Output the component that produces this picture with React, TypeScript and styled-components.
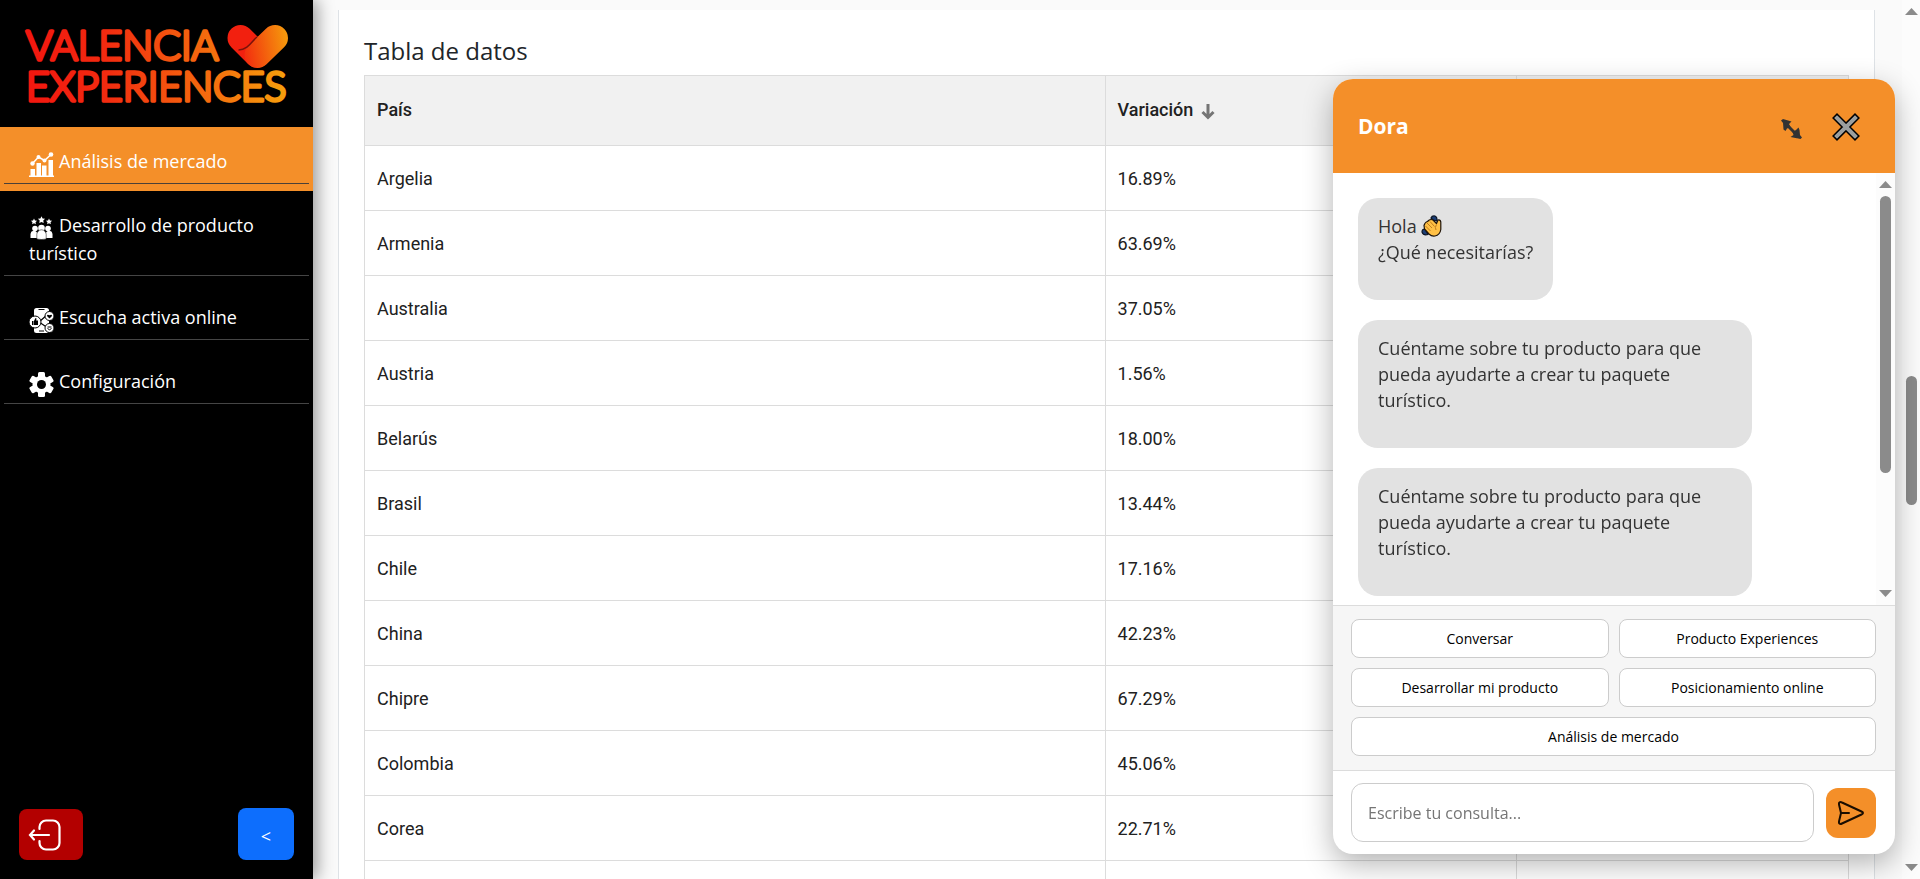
import React from "react";
import styled, { createGlobalStyle, css } from "styled-components";

const SANS = `"Open Sans", "Noto Sans", sans-serif`;
const ORANGE = "#f48f29";

const GlobalStyle = createGlobalStyle`
  *, *::before, *::after { box-sizing: border-box; }
  html, body, #root { height: 100%; }
  body { margin: 0; background: #fafafa; color: #212529; font-family: ${SANS}; font-size: 17px; overflow: hidden; }
  button, input { font-family: inherit; }
`;

const Shell = styled.div`
  display: flex;
  height: 100vh;
  overflow: hidden;
`;

/* ---------- sidebar ---------- */

const Sidebar = styled.aside`
  flex: 0 0 313px;
  display: flex;
  flex-direction: column;
  background: #000;
  box-shadow: 4px 0 16px rgba(0, 0, 0, 0.4);
`;

const LogoLink = styled.a`
  display: block;
  height: 127px;
  padding: 10px 20px;
  svg { display: block; }
`;

const Nav = styled.nav`
  flex: 1;
`;

const NavItem = styled.div<{ $active?: boolean }>`
  padding: 0 4px 7px;
  background: ${(p) => (p.$active ? ORANGE : "transparent")};
`;

const NavLink = styled.a<{ $active?: boolean }>`
  display: block;
  padding: 20px 24px 8px 25px;
  border-bottom: 1px solid ${(p) => (p.$active ? "#4a4038" : "#454545")};
  color: #fff;
  font-size: 18px;
  line-height: 28px;
  text-decoration: none;
  svg { width: 25px; height: 25px; margin: -4px 5px -4px 0; vertical-align: -5px; }
`;

const SidebarFooter = styled.div`
  display: flex;
  justify-content: space-between;
  align-items: flex-end;
  padding: 0 19px 19px;
`;

const FooterButton = styled.button<{ $tone: "danger" | "primary" }>`
  display: flex;
  align-items: center;
  border: 0;
  border-radius: 8px;
  color: #fff;
  font-size: 18px;
  cursor: pointer;
  ${(p) =>
    p.$tone === "danger"
      ? css`width: 64px; height: 51px; padding: 0 8px; background: #b30000;`
      : css`width: 56px; height: 52px; padding: 4px 0 0; justify-content: center; background: #0d6efd;`}
`;

/* ---------- main content ---------- */

const Main = styled.main`
  flex: 1;
  min-width: 0;
  padding: 10px 27px 0 25px;
  overflow: hidden;
`;

const Card = styled.section`
  padding: 26px 25px;
  background: #fff;
  border: solid #dee2e6;
  border-width: 0 1px;
`;

const CardTitle = styled.h2`
  margin: 0 0 9px;
  font-size: 24px;
  font-weight: 500;
  line-height: 30px;
`;

const DataTable = styled.table`
  width: 100%;
  table-layout: fixed;
  border-collapse: collapse;
  font-family: Roboto, sans-serif;
  font-size: 18px;
  color: #212121;
`;

const Col = styled.col<{ $share: number }>`
  width: ${(p) => p.$share}%;
`;

const HeadCell = styled.th`
  height: 70px;
  padding: 0 12px 3px;
  border: 1px solid #dcdcdc;
  background: #f1f1f1;
  font-weight: 500;
  text-align: left;
  svg { margin-left: 8px; vertical-align: -4px; }
`;

const Cell = styled.td`
  height: 65px;
  padding: 0 12px;
  border: 1px solid #dcdcdc;
`;

/* ---------- scroll bars ---------- */

const ScrollTrack = styled.div<{ $width: number; $before: number; $thumb: number }>`
  flex: 0 0 ${(p) => p.$width}px;
  display: grid;
  grid-template-rows: 7px ${(p) => p.$before}fr ${(p) => p.$thumb}fr ${(p) => 1000 - p.$before - p.$thumb}fr 7px;
  justify-items: center;
  padding: 8px 0;
  background: #fcfcfc;
  svg { display: block; }
`;

const ScrollThumb = styled.div`
  grid-row: 3;
  width: 11px;
  border-radius: 6px;
  background: #8b8b8b;
`;

const DownArrow = styled.svg`
  grid-row: 5;
`;

/* ---------- chat ---------- */

const ChatPanel = styled.section`
  position: fixed;
  top: 79px;
  right: 25px;
  bottom: 25px;
  width: 562px;
  display: flex;
  flex-direction: column;
  border-radius: 20px;
  overflow: hidden;
  background: #fff;
  box-shadow: 0 10px 30px rgba(0, 0, 0, 0.3);
`;

const ChatHeader = styled.header`
  flex: 0 0 94px;
  display: flex;
  align-items: center;
  padding: 0 35px 0 25px;
  background: ${ORANGE};
`;

const ChatTitle = styled.h3`
  flex: 1;
  margin: 0;
  color: #fff;
  font-size: 21px;
  font-weight: 700;
  line-height: 28px;
`;

const IconButton = styled.button`
  display: flex;
  margin-left: 30px;
  padding: 2px 0 0;
  border: 0;
  background: none;
  cursor: pointer;
`;

const ChatBody = styled.div`
  flex: 1;
  min-height: 0;
  display: flex;
`;

const Messages = styled.div`
  flex: 1;
  display: flex;
  flex-direction: column;
  align-items: flex-start;
  gap: 20px;
  padding: 25px 25px 0;
  overflow: hidden;
`;

const Bubble = styled.div`
  flex: none;
  max-width: 394px;
  padding: 15px 20px;
  border-radius: 20px;
  background: #e2e2e2;
  color: #333;
  font-size: 18px;
  line-height: 26px;
  p { margin: 0 0 20px; }
  svg { vertical-align: -4px; }
`;

const Suggestions = styled.div`
  display: grid;
  grid-template-columns: 1fr 1fr;
  gap: 10px;
  padding: 13px 19px 14px 18px;
  border: solid #dcdcdc;
  border-width: 1px 0;
  background: #f6f6f6;
`;

const Suggestion = styled.button<{ $wide?: boolean }>`
  height: 39px;
  grid-column: ${(p) => (p.$wide ? "1 / -1" : "auto")};
  border: 1px solid #ccc;
  border-radius: 8px;
  background: #fff;
  color: #000;
  font-size: 14px;
  line-height: 20px;
  cursor: pointer;
`;

const Composer = styled.form`
  display: flex;
  align-items: center;
  gap: 12px;
  padding: 12px 19px 12px 18px;
`;

const QueryInput = styled.input`
  flex: 1;
  min-width: 0;
  height: 59px;
  padding: 0 16px;
  border: 1px solid #ccc;
  border-radius: 12px;
  background: #fff;
  font-size: 16px;
  &::placeholder { color: #757575; opacity: 1; }
`;

const SendButton = styled.button`
  width: 50px;
  height: 50px;
  display: flex;
  align-items: center;
  justify-content: center;
  padding: 0;
  border: 0;
  border-radius: 12px;
  background: ${ORANGE};
  cursor: pointer;
`;

/* ---------- drawings ---------- */

const Logo = () => (
  <svg width="272" height="107" viewBox="20 10 272 107" role="img" aria-label="Valencia Experiences">
    <defs>
      <linearGradient id="brand" gradientUnits="userSpaceOnUse" x1="26" y1="0" x2="288" y2="0">
        <stop offset="0" stopColor="#f2160f" />
        <stop offset="0.3" stopColor="#f22a10" />
        <stop offset="0.65" stopColor="#f4640e" />
        <stop offset="1" stopColor="#f6a00c" />
      </linearGradient>
      <linearGradient id="heart" gradientUnits="userSpaceOnUse" x1="238" y1="50" x2="286" y2="42">
        <stop offset="0" stopColor="#f2200f" />
        <stop offset="1" stopColor="#f5950c" />
      </linearGradient>
    </defs>
    <g fontFamily="Lato, sans-serif" fontWeight="300" fill="url(#brand)" stroke="url(#brand)" strokeWidth="3.500" strokeLinejoin="round">
      <text x="26" y="60" fontSize="41">VALENCIA</text>
      <text x="26" y="101" fontSize="41">EXPERIENCES</text>
    </g>
    <g strokeWidth="26" strokeLinecap="round">
      <path d="M240.500 38 L257 54.500" stroke="#f2200f" />
      <path d="M275 38 L257.500 55" stroke="url(#heart)" />
    </g>
    <path d="M257 37 C252 41 248 50 238.500 50" stroke="#7a120a" strokeWidth="1.500" fill="none" />
  </svg>
);

const ChartIcon = () => (
  <svg viewBox="0 0 25 25" fill="#fff">
    <path d="M0 23.500h25V25H0zM1.500 17h4.500v6.500H1.500zM7.500 11H12v12.500H7.500zM13 13.500h4.500v10H13zM19.500 8H24v15.500h-4.500z" />
    <path d="M3.500 11.500 9.500 5l6 3.500 6.500-6" fill="none" stroke="#fff" strokeWidth="1.500" />
    <circle cx="3.500" cy="11.500" r="2.200" /><circle cx="9.500" cy="5" r="2" />
    <circle cx="15.500" cy="8.500" r="2" /><circle cx="22" cy="2.500" r="2.300" />
  </svg>
);

const STAR = "M0-3.600 1.100-1.300 3.600-1 1.800.800 2.200 3.300 0 2.100-2.200 3.300-1.800.800-3.600-1-1.100-1.300Z";

const GroupIcon = () => (
  <svg viewBox="0 0 25 25" fill="#fff">
    <path d={STAR} transform="translate(12.500 3.800)" />
    <path d={STAR} transform="translate(5 5.500) scale(.85)" />
    <path d={STAR} transform="translate(20 5.500) scale(.85)" />
    <circle cx="6" cy="12.500" r="2.800" /><circle cx="19" cy="12.500" r="2.800" />
    <path d="M1.500 21.500V18a3.500 3.500 0 0 1 6.500-1.500V22H1.500ZM23.500 21.500V18a3.500 3.500 0 0 0-6.500-1.500V22h6.500Z" />
    <circle cx="12.500" cy="12" r="3.300" />
    <path d="M7.800 23v-4.500a4.700 4.700 0 0 1 9.400 0V23q-4.700 1-9.400 0Z" stroke="#000" strokeWidth=".5" />
  </svg>
);

const SocialIcon = () => (
  <svg viewBox="0 0 25 25">
    <rect x="5" y="0" width="15" height="25" rx="2.500" fill="#fff" />
    <path d="M9.500 1.500h6M10 23h5" stroke="#000" strokeWidth="1.200" />
    <path d="M10 14 18 7M10 14l9 6" stroke="#000" strokeWidth="1.200" />
    <g fill="#fff" stroke="#000" strokeWidth="1">
      <circle cx="6" cy="14" r="6" /><circle cx="20.500" cy="8" r="4.500" /><circle cx="20.500" cy="20" r="4.500" />
    </g>
    <path d="M3 13h1.500v4H3zM5 17v-4l1.500-3 1 .5-.3 2H9v4.500z" fill="#000" />
    <path d="M20.500 10.500 18 8q0-2 2.500-.7Q23 6 23 8z" fill="#000" />
    <path d="M18.500 19h4M18.500 20.500q2 2.500 4 0" fill="none" stroke="#000" />
  </svg>
);

const GearIcon = () => (
  <svg viewBox="0 0 25 25">
    <g fill="#fff">
      {[0, 60, 120].map((a) => (
        <rect key={a} x="9" y="0" width="7" height="25" rx="1.500" transform={`rotate(${a} 12.500 12.500)`} />
      ))}
      <circle cx="12.500" cy="12.500" r="9" />
    </g>
    <circle cx="12.500" cy="12.500" r="4.500" fill="#000" />
  </svg>
);

const LogoutIcon = () => (
  <svg width="34" height="34" viewBox="0 0 34 34" fill="none" stroke="#fff" strokeWidth="2.200" strokeLinecap="round">
    <path d="M12.500 11V9a6.500 6.500 0 0 1 6.500-6.500h7A6.500 6.500 0 0 1 32.500 9v16a6.500 6.500 0 0 1-6.500 6.500h-7a6.500 6.500 0 0 1-6.500-6.500v-2" />
    <path d="M22 17H4M7 12.500 3 17l4 4.500" />
  </svg>
);

const SortArrow = () => (
  <svg width="14" height="16" viewBox="0 0 14 16" fill="none" stroke="#757575" strokeWidth="3">
    <path d="M7 0v13M1.500 8 7 13.500 12.500 8" />
  </svg>
);

const ResizeIcon = () => (
  <svg width="21" height="26" viewBox="0 -5 21 26" fill="#333">
    <path d="M0 1.500 2 0 10.500 2.500 8 5 9.500 8 6 9.500 4.500 12 2.500 10.500 2 4ZM21 18.500 19.500 20 9.500 18 12.500 16 11.500 13 15 11 17.500 8.500 18.500 11 19 16Z" />
    <path d="M4 4l13 13" stroke="#333" strokeWidth="3" />
  </svg>
);

const CloseIcon = () => (
  <svg width="28" height="28" viewBox="0 0 28 28" strokeLinecap="square" strokeLinejoin="round">
    <path d="M5 5l18 18M23 5 5 23" stroke="#000" strokeWidth="7" />
    <path d="M5 5l18 18M23 5 5 23" stroke="#9b9f9f" strokeWidth="4" />
  </svg>
);

const WaveIcon = () => (
  <svg width="21" height="22" viewBox="0 0 21 22">
    <g fill="#1d3f77" stroke="#0b1526" strokeWidth="1.200">
      <path d="M10 3Q11 .5 14 1q2.500 1 2 5l-4-1Z" />
      <path d="M4 14Q1 14 1 17q1.500 4 6 2.500Z" />
    </g>
    <path d="M3 10.500Q4 7 6.500 6.500 9 3.500 12 5l3.500 3.500L17 5q3-.5 2.800 3v6.500Q19 20 14 21q-3.500.5-6-2l-4.500-5Z" fill="#ffc045" stroke="#20150a" strokeWidth="1.200" strokeLinejoin="round" />
    <path d="M6 8l5 5M9 6.500l4.500 5M4.500 11l5 5M15.500 9.500q-2 3-.5 5.500" stroke="#b8741a" strokeWidth=".9" fill="none" />
  </svg>
);

const SendIcon = () => (
  <svg width="28" height="26" viewBox="0 0 28 26" fill="none" stroke="#1a0d00" strokeWidth="2" strokeLinejoin="round" strokeLinecap="round">
    <path d="M2 4.500C1.500 2.500 3 1.500 5 2.500L24.500 11.500c2 1 2 2 0 3L5 23.500c-2 1-3.500 0-3-2L4 13ZM4 13h8" />
  </svg>
);

const Arrow = () => (
  <svg width="13" height="7" viewBox="0 0 13 7" fill="#8b8b8b"><path d="M6.500 0 13 7H0Z" /></svg>
);

/* ---------- data ---------- */

const navigation = [
  { label: "Análisis de mercado", icon: <ChartIcon />, active: true },
  { label: "Desarrollo de producto turístico", icon: <GroupIcon /> },
  { label: "Escucha activa online", icon: <SocialIcon /> },
  { label: "Configuración", icon: <GearIcon /> },
];

const countries: [string, string][] = [
  ["Argelia", "16.89%"],
  ["Armenia", "63.69%"],
  ["Australia", "37.05%"],
  ["Austria", "1.56%"],
  ["Belarús", "18.00%"],
  ["Brasil", "13.44%"],
  ["Chile", "17.16%"],
  ["China", "42.23%"],
  ["Chipre", "67.29%"],
  ["Colombia", "45.06%"],
  ["Corea", "22.71%"],
  ["", ""],
];

const PROMPT = "Cuéntame sobre tu producto para que pueda ayudarte a crear tu paquete turístico.";

const suggestions = [
  "Conversar",
  "Producto Experiences",
  "Desarrollar mi producto",
  "Posicionamiento online",
  "Análisis de mercado",
];

const Scroll = (p: { width: number; before: number; thumb: number }) => (
  <ScrollTrack $width={p.width} $before={p.before} $thumb={p.thumb} aria-hidden="true">
    <Arrow />
    <ScrollThumb />
    <DownArrow width="13" height="7" viewBox="0 0 13 7" fill="#8b8b8b">
      <path d="M0 0h13L6.500 7Z" />
    </DownArrow>
  </ScrollTrack>
);

export default function App() {
  return (
    <>
      <GlobalStyle />
      <Shell>
        <Sidebar>
          <LogoLink href="#"><Logo /></LogoLink>
          <Nav>
            {navigation.map((n) => (
              <NavItem key={n.label} $active={n.active}>
                <NavLink href="#" $active={n.active}>{n.icon}{n.label}</NavLink>
              </NavItem>
            ))}
          </Nav>
          <SidebarFooter>
            <FooterButton $tone="danger" aria-label="Cerrar sesión"><LogoutIcon /></FooterButton>
            <FooterButton $tone="primary">&lt;</FooterButton>
          </SidebarFooter>
        </Sidebar>

        <Main>
          <Card>
            <CardTitle>Tabla de datos</CardTitle>
            <DataTable>
              <colgroup>
                <Col $share={49.9} />
                <Col $share={27.7} />
                <Col $share={22.4} />
              </colgroup>
              <thead>
                <tr>
                  <HeadCell>País</HeadCell>
                  <HeadCell>Variación<SortArrow /></HeadCell>
                  <HeadCell />
                </tr>
              </thead>
              <tbody>
                {countries.map(([name, change]) => (
                  <tr key={name}>
                    <Cell>{name}</Cell>
                    <Cell>{change}</Cell>
                    <Cell />
                  </tr>
                ))}
              </tbody>
            </DataTable>
          </Card>
        </Main>
        <Scroll width={18} before={425} thumb={152} />
      </Shell>

      <ChatPanel aria-label="Dora">
        <ChatHeader>
          <ChatTitle>Dora</ChatTitle>
          <IconButton aria-label="Ampliar"><ResizeIcon /></IconButton>
          <IconButton aria-label="Cerrar"><CloseIcon /></IconButton>
        </ChatHeader>
        <ChatBody>
          <Messages>
            <Bubble><p>Hola <WaveIcon /><br />¿Qué necesitarías?</p></Bubble>
            <Bubble><p>{PROMPT}</p></Bubble>
            <Bubble><p>{PROMPT}</p></Bubble>
          </Messages>
          <Scroll width={19} before={20} thumb={690} />
        </ChatBody>
        <Suggestions>
          {suggestions.map((s, i) => (
            <Suggestion key={s} $wide={i === 4}>{s}</Suggestion>
          ))}
        </Suggestions>
        <Composer onSubmit={(e) => e.preventDefault()}>
          <QueryInput aria-label="Consulta" placeholder="Escribe tu consulta..." />
          <SendButton aria-label="Enviar"><SendIcon /></SendButton>
        </Composer>
      </ChatPanel>
    </>
  );
}
